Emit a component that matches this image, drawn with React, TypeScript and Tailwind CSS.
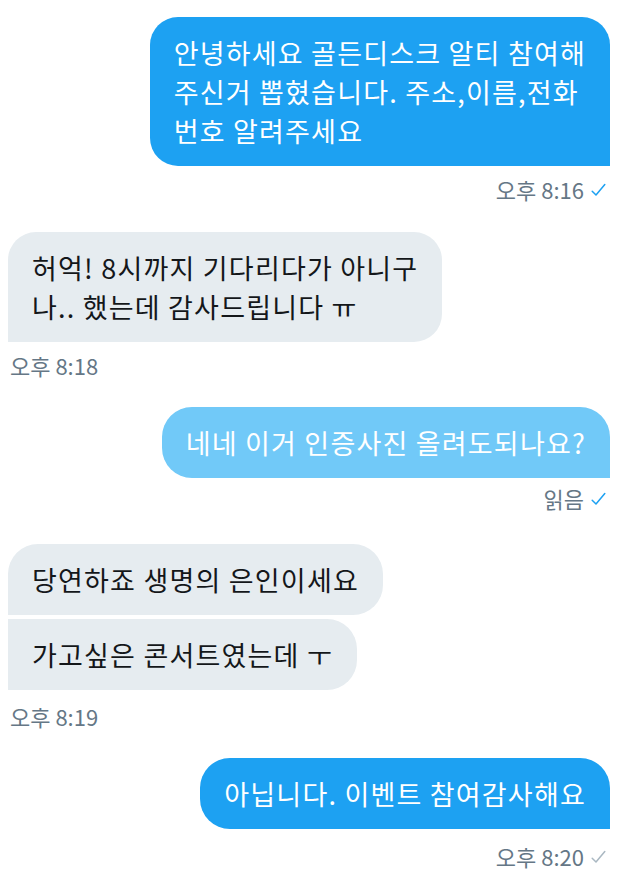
import React from 'react';

type Msg = { lines: string[]; tone: 'blue' | 'light' | 'gray'; shape: string };

const FONT = { fontFamily: '"Noto Sans CJK KR", "Noto Sans", sans-serif' };

const Check: React.FC<{ color: string }> = ({ color }) => (
  <svg width="15" height="14" viewBox="0 0 15 14" fill="none" className="ml-[7px] mt-[2px]">
    <path d="M1.2 8.2 L5 12 L13.8 1.5" stroke={color} strokeWidth="1.5" strokeLinecap="round" strokeLinejoin="round" />
  </svg>
);

const Bubble: React.FC<{ msg: Msg }> = ({ msg }) => {
  const tone =
    msg.tone === 'blue'
      ? 'bg-[#1da1f2] text-white'
      : msg.tone === 'light'
      ? 'bg-[#71c9f8] text-white'
      : 'bg-[#e6ecf0] text-[#14171a]';
  return (
    <div className={`${tone} ${msg.shape} px-6 py-4 text-[27px] leading-[39px] tracking-[1.2px] whitespace-nowrap`}>
      {msg.lines.map((l, i) => (
        <div key={i}>{l}</div>
      ))}
    </div>
  );
};

const Stamp: React.FC<{ text: string; check?: string; right?: boolean }> = ({ text, check, right }) => (
  <div className={`flex items-center text-[22px] leading-[24px] text-[#657786] ${right ? 'justify-end pr-[36px]' : 'pl-[10px]'}`}>
    <span>{text}</span>
    {check && <Check color={check} />}
  </div>
);

const App: React.FC = () => {
  return (
    <div className="w-[642px] h-[878px] bg-white overflow-hidden" style={FONT}>
      <div className="flex flex-col pt-[17px]">
        {/* sent */}
        <div className="flex justify-end pr-[32px]">
          <Bubble
            msg={{
              lines: ['안녕하세요 골든디스크 알티 참여해', '주신거 뽑혔습니다. 주소,이름,전화', '번호 알려주세요'],
              tone: 'blue',
              shape: 'rounded-[28px] rounded-br-none',
            }}
          />
        </div>
        <div className="mt-[11px]">
          <Stamp text="오후 8:16" check="#1da1f2" right />
        </div>

        {/* received */}
        <div className="flex justify-start pl-[8px] mt-[31px]">
          <Bubble
            msg={{
              lines: ['허억! 8시까지 기다리다가 아니구', '나.. 했는데 감사드립니다 ㅠ'],
              tone: 'gray',
              shape: 'rounded-[28px] rounded-bl-none',
            }}
          />
        </div>
        <div className="mt-[11px]">
          <Stamp text="오후 8:18" />
        </div>

        {/* sent, pending */}
        <div className="flex justify-end pr-[32px] mt-[30px]">
          <Bubble
            msg={{ lines: ['네네 이거 인증사진 올려도되나요?'], tone: 'light', shape: 'rounded-[30px] rounded-br-none' }}
          />
        </div>
        <div className="mt-[8px]">
          <Stamp text="읽음" check="#1da1f2" right />
        </div>

        {/* received group */}
        <div className="flex flex-col items-start pl-[8px] mt-[34px] gap-[4px]">
          <Bubble
            msg={{ lines: ['당연하죠 생명의 은인이세요'], tone: 'gray', shape: 'rounded-[30px] rounded-bl-none' }}
          />
          <Bubble
            msg={{ lines: ['가고싶은 콘서트였는데 ㅜ'], tone: 'gray', shape: 'rounded-[30px] rounded-l-none' }}
          />
        </div>
        <div className="mt-[14px]">
          <Stamp text="오후 8:19" />
        </div>

        {/* sent */}
        <div className="flex justify-end pr-[32px] mt-[30px]">
          <Bubble
            msg={{ lines: ['아닙니다. 이벤트 참여감사해요'], tone: 'blue', shape: 'rounded-[30px] rounded-br-none' }}
          />
        </div>
        <div className="mt-[15px]">
          <Stamp text="오후 8:20" check="#aab8c2" right />
        </div>
      </div>
    </div>
  );
};

export default App;
